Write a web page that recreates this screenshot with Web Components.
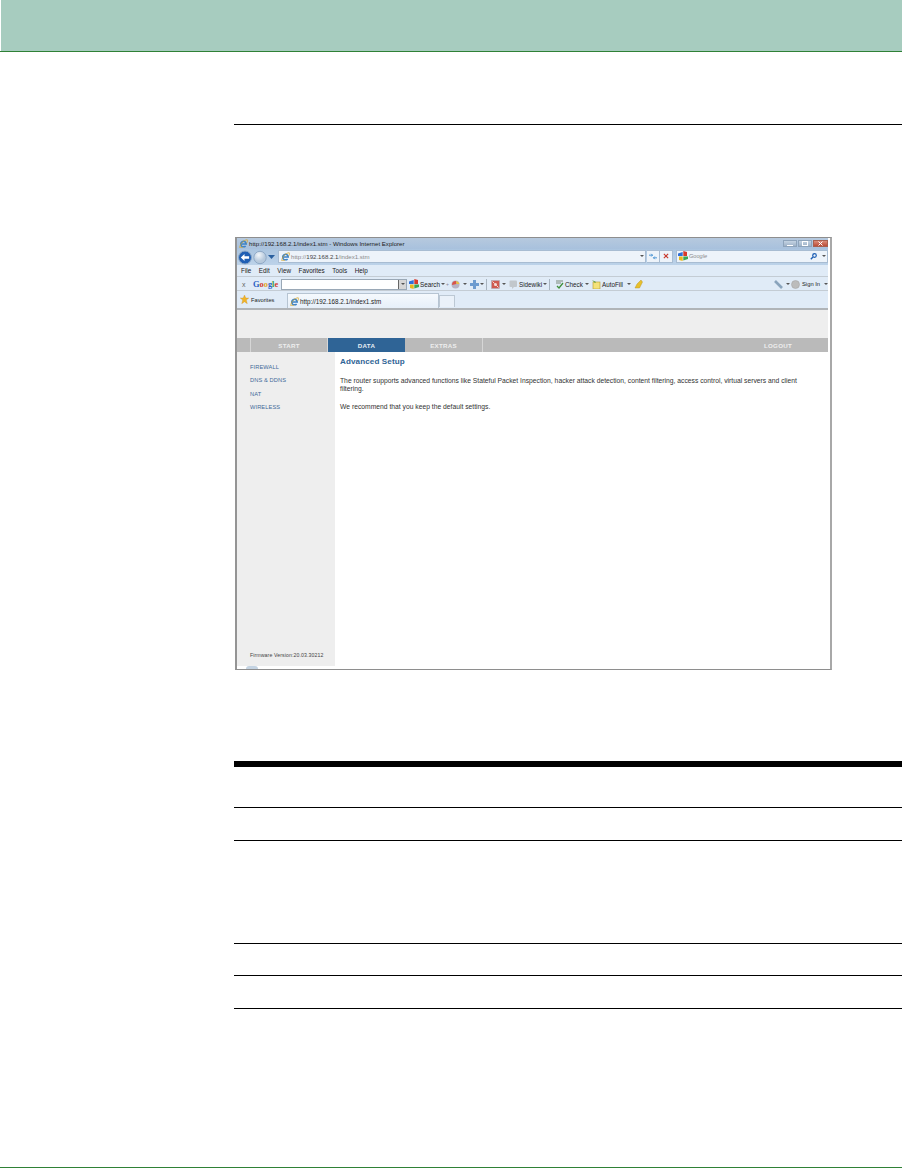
<!DOCTYPE html>
<html><head><meta charset="utf-8">
<style>
html,body{margin:0;padding:0;background:#fff}
body{font-family:"Liberation Sans",Arial,sans-serif}
</style></head>
<body>
<doc-page>
  <ie-window slot="figure"></ie-window>
  <spec-table slot="table"></spec-table>
</doc-page>
<script>
const IE=`<svg width="9" height="9" viewBox="0 0 12 12" style="flex:none"><path d="M2.500 6.800h7.200A3.700 3.700 0 1 0 8.800 9.200" fill="none" stroke="#3b82c8" stroke-width="2"/><path d="M1 11.500C1.500 6 6 1.500 11 1c1 1 0 3-1 4.500M1 11.500c1 .5 3 0 4.500-1" stroke="#dba520" stroke-width="1" fill="none"/></svg>`;
const G=`<svg width="10" height="10" viewBox="0 0 10 10" style="flex:none"><path d="M0 2.500 4.700 1v4H0z" fill="#2f6fd8"/><path d="M5.300 0 9 1v4H5.300z" fill="#d8392b"/><path d="M1 5.500h3.700V10L1 9z" fill="#e9b81c"/><path d="M5.300 5.500H10V8L5.300 9.500z" fill="#3aa655"/></svg>`;
const DD=`<svg class="dd" width="4" height="2" viewBox="0 0 4 2" style="flex:none"><path d="M0 0h4L2 2z" fill="#555"/></svg>`;
function def(name,html){customElements.define(name,class extends HTMLElement{constructor(){super();this.attachShadow({mode:'open'}).innerHTML=html}})}

def('doc-page',`<style>
:host{display:flex;flex-direction:column;width:902px;height:1168px;box-sizing:border-box;border-bottom:1px solid #2f8136;overflow:hidden}
.banner{height:51px;margin-left:1px;background:#a7ccbf;flex:none}
.gline{height:1px;background:#2f8136;flex:none}
.main{margin-left:234px;flex:1;display:flex;flex-direction:column}
.rule{height:1px;background:#000;margin-top:72px;flex:none}
.fig{margin:112px 0 0 1px;flex:none}
.tbl{margin-top:91px;flex:none}
</style>
<div class="banner"></div><div class="gline"></div>
<div class="main"><div class="rule"></div>
<div class="fig"><slot name="figure"></slot></div>
<div class="tbl"><slot name="table"></slot></div></div>`);

def('spec-table',`<style>
:host{display:flex;flex-direction:column}
.top{height:6px;background:#000}
.r{border-bottom:1px solid #000;box-sizing:border-box}
</style>
<div class="top"></div>
<div class="r" style="height:41px"></div>
<div class="r" style="height:33px"></div>
<div class="r" style="height:103px"></div>
<div class="r" style="height:32px"></div>
<div class="r" style="height:33px"></div>`);

def('ie-title',`<style>
:host{display:flex;align-items:center;height:11px;box-sizing:border-box;background:linear-gradient(#b6c9de,#a8c1dd);padding:0 0 1px 2px;font:6.100px "Liberation Sans",sans-serif;color:#222;gap:1px;white-space:nowrap}
span{flex:1}
.b{display:flex;gap:1px;height:7px;margin-top:1px}
.b i{display:flex;align-items:center;justify-content:center;height:7px;border:1px solid #8ea4bb;box-sizing:border-box;background:linear-gradient(#c4d3e3,#9fb3c8);width:14px}
.b i.x{background:linear-gradient(#dc8c78,#bb4c38);width:15px;border-color:#a8604f}
</style>${IE}<span>http://192.168.2.1/index1.stm - Windows Internet Explorer</span>
<div class="b"><i><svg width="6" height="4" viewBox="0 0 6 4"><path d="M0 3.500h6" stroke="#fff"/></svg></i><i><svg width="6" height="5" viewBox="0 0 6 5"><rect x=".5" y=".5" width="5" height="4" fill="none" stroke="#fff"/></svg></i><i class="x"><svg width="5" height="5" viewBox="0 0 5 5"><path d="M.5.500l4 4M4.500.500l-4 4" stroke="#fff"/></svg></i></div>`);

def('ie-address',`<style>
:host{display:flex;align-items:center;height:16px;background:linear-gradient(#abc5e0,#bcd2e9);padding:0 0 2px 1px;box-sizing:border-box;font:6.100px "Liberation Sans",sans-serif;color:#8a8a8a;gap:1px;white-space:nowrap}
.nav{display:flex;align-items:center;gap:1px;margin:2px 2px 0 0}
.url{width:368px;height:13px;background:#edf3fa;border:1px solid #a8bcd2;box-sizing:border-box;display:flex;align-items:center;padding:0 1px 0 2px;gap:1px}
.url b{font-weight:400;color:#444}
.url span{flex:1}
.btns{display:flex;align-items:center;height:13px;margin-right:2px}
.btns div{width:13px;height:13px;background:#edf3fa;border:1px solid #a8bcd2;border-left:0;box-sizing:border-box;display:flex;align-items:center;justify-content:center}
.search{flex:1;height:13px;background:#edf3fa;border:1px solid #a8bcd2;box-sizing:border-box;display:flex;align-items:center;padding:0 1px 0 1px;gap:1px}
.search span{flex:1;font-size:5.600px;font-style:italic}
</style>
<div class="nav">
<svg width="14" height="15" viewBox="0 0 14 15"><circle cx="7" cy="7.500" r="6.500" fill="#1f5fb4" stroke="#8fa9c6"/><path d="M2.800 7.500l3.700-3.400v2.100h4.600v2.600H6.500v2.100z" fill="#fff"/></svg>
<svg width="14" height="15" viewBox="0 0 14 15"><defs><radialGradient id="g" cx=".4" cy=".3"><stop offset="0" stop-color="#f3f7fb"/><stop offset="1" stop-color="#b7c9dc"/></radialGradient></defs><circle cx="7" cy="7.500" r="6.200" fill="url(#g)" stroke="#8fa9c6"/></svg>
<svg width="7" height="4" viewBox="0 0 7 4"><path d="M0 0h7L3.500 4z" fill="#2a5f9e"/></svg>
</div>
<div class="url">${IE}<span>http://<b>192.168.2.1</b>/index1.stm</span>${DD}</div>
<div class="btns"><div><svg width="8" height="7" viewBox="0 0 9 7"><path d="M0 2h4M2.500.500 4 2 2.500 3.500" stroke="#3a8bd0" fill="none"/><path d="M9 5H5M6.500 3.500 5 5 6.500 6.500" stroke="#3a8bd0" fill="none"/></svg></div><div><svg width="6" height="6" viewBox="0 0 7 7"><path d="M1 1l5 5M6 1L1 6" stroke="#c8382c" stroke-width="1.300"/></svg></div></div>
<div class="search">${G}<span>Google</span><svg width="7" height="7" viewBox="0 0 7 7"><circle cx="4.500" cy="2.500" r="1.800" fill="none" stroke="#1f5fb4" stroke-width="1.200"/><path d="M3 4L.8 6.200" stroke="#1f5fb4" stroke-width="1.400"/></svg><i style="width:3px"></i>${DD}</div>`);

def('ie-menu',`<style>
:host{display:flex;align-items:center;height:12px;background:#e0ebf7;font:6.350px "Liberation Sans",sans-serif;color:#222;padding-left:4px;gap:7.600px;border-bottom:1px solid #c4ccd4;box-sizing:border-box}
</style><span>File</span><span>Edit</span><span>View</span><span>Favorites</span><span>Tools</span><span>Help</span>`);

def('ie-googlebar',`<style>
:host{display:flex;align-items:center;height:14px;background:#e0ebf7;font:6.300px "Liberation Sans",sans-serif;color:#222;white-space:nowrap;padding:1px 0 0 5px;border-bottom:1px solid #c4ccd4;box-sizing:border-box}
.x{color:#666;width:11px;font-size:7px}
.logo{font:700 8.400px "Liberation Serif",serif;width:28px}
.logo i{font-style:normal}
.input{width:126px;height:11px;background:#fff;border:1px solid #9aa8b6;box-sizing:border-box;display:flex;justify-content:flex-end}
.input u{display:flex;width:7px;background:#d6d6d6;align-items:center;justify-content:center;border-left:1px solid #666}
.it{display:flex;align-items:center;gap:1px;flex:none}
.it .dd{margin-left:auto;margin-right:3px}
.sep{width:1px;height:11px;background:#a8b4c0;flex:none}
.sq{display:block;width:9px;height:9px;flex:none}
.right{margin-left:auto}
.right .sq{margin-right:3px}
</style>
<span class="x">x</span>
<span class="logo"><i style="color:#2a5fc4">G</i><i style="color:#d43a2c">o</i><i style="color:#e3a91a">o</i><i style="color:#2a5fc4">g</i><i style="color:#3a9a4c">l</i><i style="color:#d43a2c">e</i></span>
<div class="input"><u>${DD}</u></div>
<div class="it" style="margin-left:2px;width:37px">${G}<span>Search</span>${DD}</div>
<span style="width:5px;color:#889;font-size:5px">+</span>
<div class="it" style="width:19px"><svg class="sq" viewBox="0 0 9 9"><circle cx="4.500" cy="4.500" r="4" fill="#b7b2c4"/><path d="M1 5a4 4 0 0 1 4-4l.5 3z" fill="#d9534a"/><path d="M5 1a4 4 0 0 1 3.500 3L5.500 4z" fill="#e7c341"/></svg>${DD}</div>
<div class="it" style="width:16px"><svg class="sq" viewBox="0 0 9 9"><path d="M3 0h3v3h3v3H6v3H3V6H0V3h3z" fill="#6c9bd0"/></svg>${DD}</div>
<div class="sep" style="margin-right:4px"></div>
<div class="it" style="width:18px"><svg class="sq" viewBox="0 0 9 9"><rect x=".5" y=".5" width="8" height="8" fill="#cf5a50" stroke="#aab" stroke-width=".5"/><circle cx="4.500" cy="4.500" r="1.500" fill="#f5dcd8"/><path d="M1.500 1.500l2 2M7.500 7.500l-2-2" stroke="#f5dcd8"/></svg>${DD}</div>
<div class="it" style="width:40px"><svg class="sq" viewBox="0 0 9 9"><rect x=".5" y=".5" width="7.500" height="6.500" rx="1" fill="#c2c7cb"/><path d="M3 7v2l2-2" fill="#c2c7cb"/></svg><span>Sidewiki</span>${DD}</div>
<div class="sep" style="margin-right:5px"></div>
<div class="it" style="width:37px"><svg class="sq" viewBox="0 0 9 9"><path d="M1 1h7M1 3h5" stroke="#7d8a7d"/><path d="M2 6l2 2 4-5" stroke="#3f8f3a" stroke-width="1.300" fill="none"/></svg><span>Check</span>${DD}</div>
<div class="it" style="width:42px"><svg class="sq" viewBox="0 0 9 9"><rect x="1" y="2" width="7" height="7" fill="#f4e27a" stroke="#b49a30" stroke-width=".6"/><path d="M0 0l4 2-1 1z" fill="#5a9a3a"/></svg><span>AutoFill</span>${DD}</div>
<svg class="sq" viewBox="0 0 9 9"><path d="M1 8l2-4 4-4 1.500 2-3 6z" fill="#e8c02c" stroke="#b08a1a" stroke-width=".4"/></svg>
<div class="it right" style="gap:0"><svg class="sq" viewBox="0 0 9 9"><path d="M1 1l7 7" stroke="#8aa4bc" stroke-width="2.600"/></svg>${DD.replace('class="dd"','')}<svg width="9" height="9" viewBox="0 0 9 9" style="margin:0 2px 0 1px"><circle cx="4.500" cy="4.500" r="4" fill="#bcbcbc" stroke="#a0a0a0" stroke-width=".5"/></svg><span style="font-size:5.800px;width:22px">Sign In</span>${DD.replace('class="dd"','')}</div>`);

def('ie-tabs',`<style>
:host{display:flex;align-items:flex-end;height:19px;background:#e0ebf7;font:6.200px "Liberation Sans",sans-serif;color:#222;white-space:nowrap;box-sizing:border-box;border-bottom:2px solid #b0b4b8}
.fav{display:flex;align-items:center;gap:2px;width:50px;height:14px;padding-left:3px;box-sizing:border-box;font-size:5.700px;align-self:center}
.tab{display:flex;align-items:center;gap:1px;width:152px;height:15px;background:linear-gradient(#f5f9fd,#e6eff9);border:1px solid #b6c4d2;border-bottom:0;box-sizing:border-box;padding-left:2px;font-size:6.300px}
.new{width:16px;height:12px;background:#eaf1f9;border:1px solid #bcc8d4;border-bottom:0;box-sizing:border-box;margin-bottom:1px}
</style>
<div class="fav"><svg width="9" height="9" viewBox="0 0 9 9" style="flex:none"><path d="M4.500 0l1.300 3h3L6.300 5l1 3.800-2.800-2-2.800 2 1-3.800L.2 3h3z" fill="#f0b429" stroke="#c98a1a" stroke-width=".3"/></svg>Favorites</div>
<div class="tab">${IE}http://192.168.2.1/index1.stm</div><div class="new"></div>`);

def('router-nav',`<style>
:host{display:flex;height:14px;background:#bababa;font:700 6.200px "Liberation Sans",sans-serif;color:#eee;letter-spacing:.25px;flex:none}
div{display:flex;align-items:center;justify-content:center;box-sizing:border-box;border-right:1px solid #d6d6d6}
.a{background:#2f6496;color:#e6edf4;border-right:0}
</style>
<div style="width:14px"></div><div style="width:77px">START</div><div class="a" style="width:77px">DATA</div><div style="width:78px">EXTRAS</div>
<div style="flex:1;border:0;justify-content:flex-end;padding-right:36px">LOGOUT</div>`);

def('router-side',`<style>
:host{display:flex;flex-direction:column;width:98px;background:#eee;box-sizing:border-box;padding:10.500px 0 0 13px;font:5.700px "Liberation Sans",sans-serif;color:#3e6a99;flex:none;position:relative;letter-spacing:.1px}
div{height:13.500px;line-height:9px}
.fw{position:absolute;left:13px;bottom:6px;color:#444;white-space:nowrap;height:auto;font-size:5.200px}
.bub{position:absolute;left:9px;bottom:-3px;width:12px;height:3px;background:#c4d3e2;border-radius:6px 6px 0 0}
</style>
<div>FIREWALL</div><div>DNS &amp; DDNS</div><div>NAT</div><div>WIRELESS</div>
<div class="fw">Firmware Version:20.03.30212</div><div class="bub"></div>`);

def('router-content',`<style>
:host{display:block;flex:1;background:#fff;padding:5px 12px 0 5px;font:6.760px/8px "Liberation Sans",sans-serif;color:#333;box-sizing:border-box}
h1{font:700 8.100px/10px "Liberation Sans",sans-serif;color:#2f6496;margin:0 0 10px;letter-spacing:.1px}
p{margin:0 0 10px}
</style>
<h1>Advanced Setup</h1>
<p>The router supports advanced functions like Stateful Packet Inspection, hacker attack detection, content filtering, access control, virtual servers and client filtering.</p>
<p>We recommend that you keep the default settings.</p>`);

def('ie-window',`<style>
:host{display:flex;flex-direction:column;width:597px;height:433px;box-sizing:border-box;border-top:1px solid #8e8e8e;border-left:2px solid #949494;border-right:2px solid #a8a8a8;border-bottom:1px solid #8e8e8e;padding-right:2px;background:#fff}
.hdr{height:28px;background:#eee;flex:none}
.body{display:flex;flex:1;min-height:0;padding-bottom:3px}
</style>
<ie-title></ie-title><ie-address></ie-address><ie-menu></ie-menu><ie-googlebar></ie-googlebar><ie-tabs></ie-tabs>
<div class="hdr"></div><router-nav></router-nav>
<div class="body"><router-side></router-side><router-content></router-content></div>`);
</script>
</body></html>
